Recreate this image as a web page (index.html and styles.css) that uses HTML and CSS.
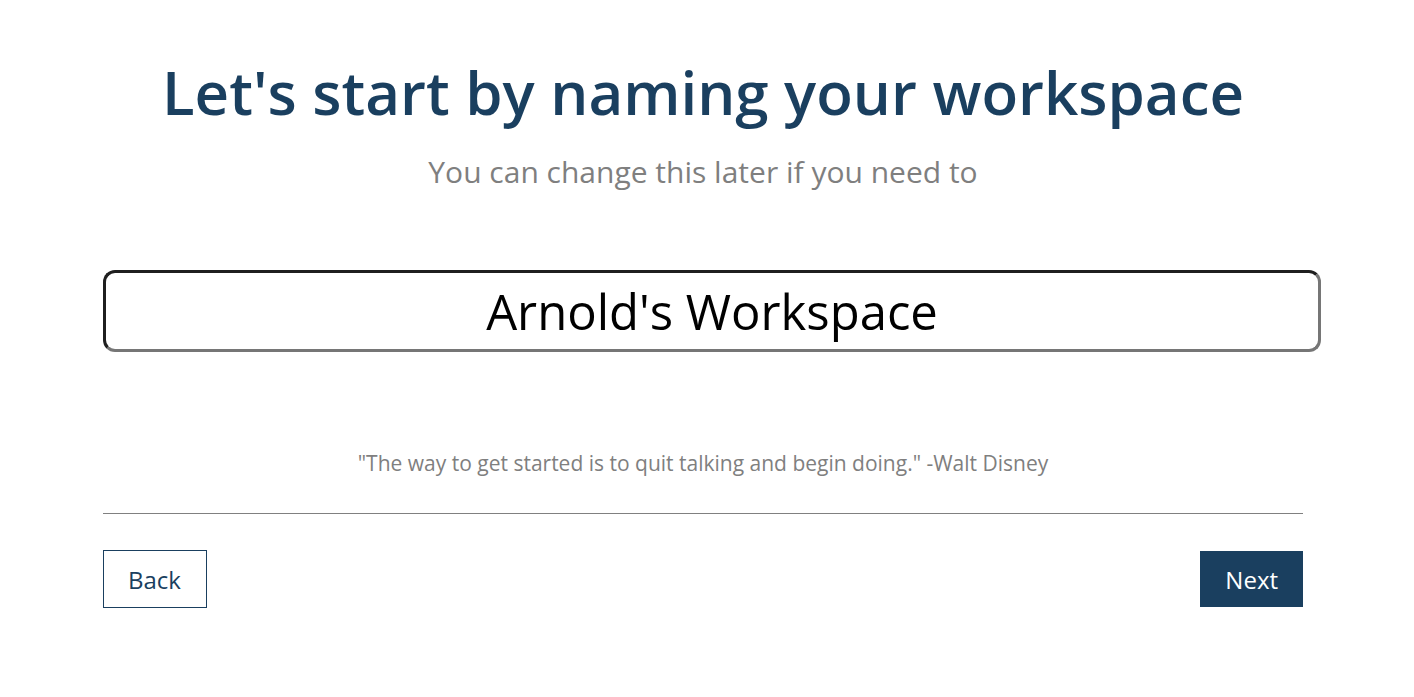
FILE: index.html
```html
<!DOCTYPE html>
<html lang="en">
<head>
<meta charset="utf-8">
<title>Name your workspace</title>
<link rel="stylesheet" href="styles.css">
</head>
<body>
<main class="page">
  <h1 class="title">Let's start by naming your workspace</h1>
  <p class="subtitle">You can change this later if you need to</p>
  <input class="name-input" type="text" value="Arnold's Workspace">
  <p class="quote">"The way to get started is to quit talking and begin doing." -Walt Disney</p>
  <hr class="divider">
  <div class="actions">
    <button class="btn btn-back">Back</button>
    <button class="btn btn-next">Next</button>
  </div>
</main>
</body>
</html>
```
FILE: styles.css
```css
html, body {
  margin: 0;
  padding: 0;
  background: #ffffff;
}
body {
  font-family: "Open Sans", "Noto Sans", sans-serif;
  padding-right: 8px;
}
.page {
  width: 1200px;
  margin: 0 auto;
  display: flex;
  flex-direction: column;
  align-items: stretch;
}
.title {
  margin: 51px 0 0;
  font-size: 60px;
  font-weight: 600;
  line-height: 82px;
  color: #1a3f5f;
  text-align: center;
}
.subtitle {
  margin: 19px 0 0;
  font-size: 30px;
  line-height: 40px;
  color: #7f7f7f;
  text-align: center;
}
.name-input {
  box-sizing: content-box;
  width: 100%;
  margin: 78px 0 0;
  padding: 6px;
  height: 64px;
  border-style: solid;
  border-width: 3px;
  border-top-color: #1f1f1f;
  border-left-color: #1f1f1f;
  border-right-color: #767676;
  border-bottom-color: #767676;
  border-radius: 12px;
  font-family: "Open Sans", "Noto Sans", sans-serif;
  font-size: 49px;
  color: #000000;
  text-align: center;
  outline: none;
  background: #ffffff;
}
.quote {
  margin: 97px 0 0;
  font-size: 21px;
  line-height: 28px;
  color: #7f7f7f;
  text-align: center;
}
.divider {
  margin: 36px 0 0;
  border: 0;
  border-top: 1px solid #808080;
  height: 0;
}
.actions {
  margin-top: 36px;
  display: flex;
  justify-content: space-between;
  align-items: center;
}
.btn {
  font-family: "Open Sans", "Noto Sans", sans-serif;
  font-size: 24px;
  cursor: pointer;
}
.btn-back {
  height: 58px;
  padding: 0 25px 0 24px;
  background: #ffffff;
  color: #1a3f5f;
  border: 1px solid #1a3f5f;
}
.btn-next {
  height: 56px;
  padding: 0 25px;
  background: #1a3f5f;
  color: #ffffff;
  border: 0;
}
```
